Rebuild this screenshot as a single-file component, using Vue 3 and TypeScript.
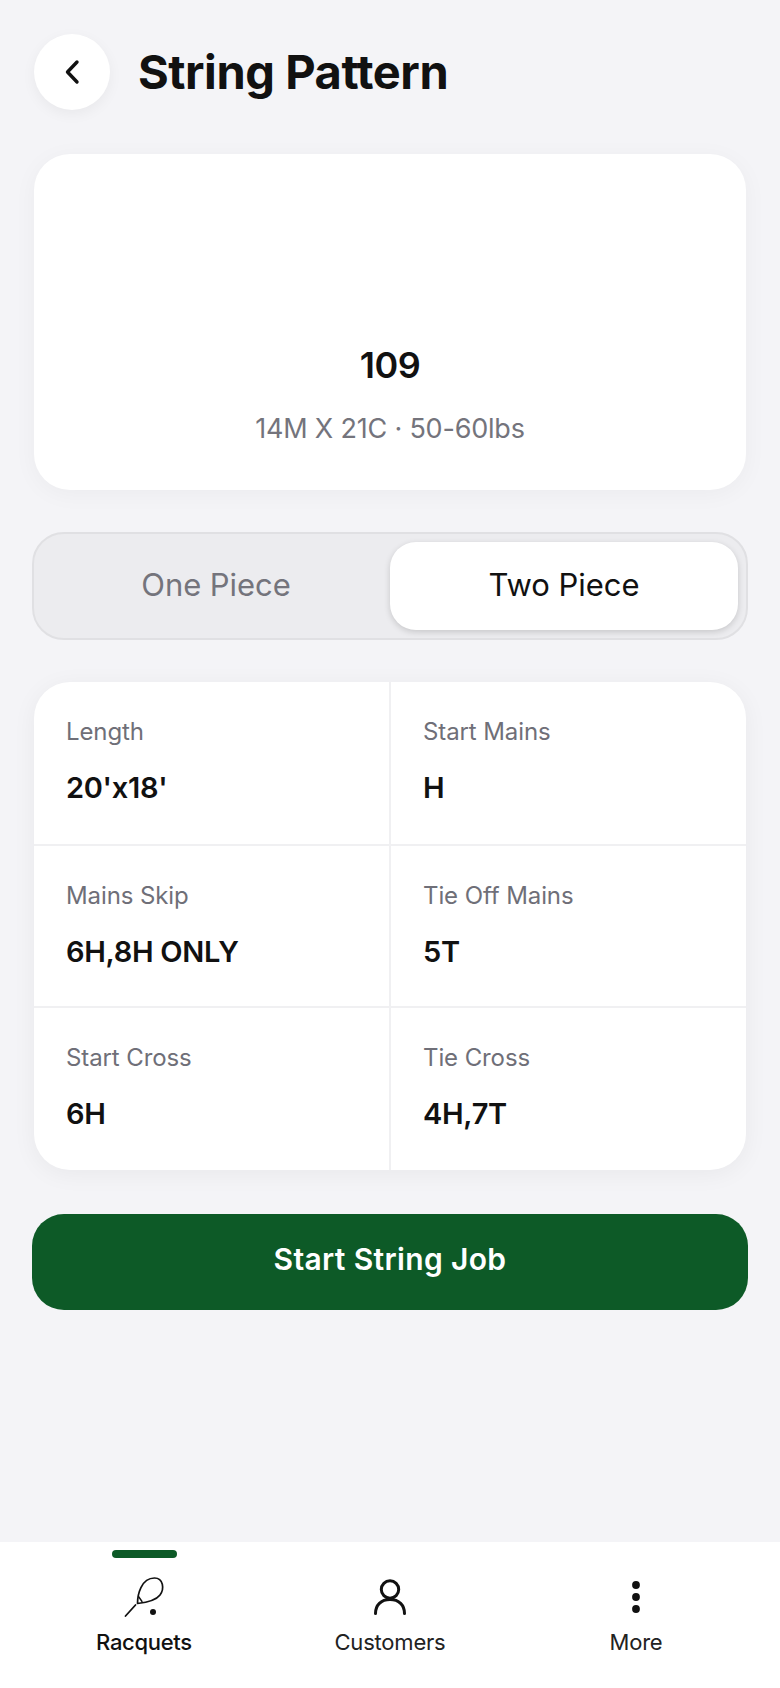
<script setup lang="ts">
const cells: { label: string; value: string }[] = [
  { label: 'Length', value: "20'x18'" },
  { label: 'Start Mains', value: 'H' },
  { label: 'Mains Skip', value: '6H,8H ONLY' },
  { label: 'Tie Off Mains', value: '5T' },
  { label: 'Start Cross', value: '6H' },
  { label: 'Tie Cross', value: '4H,7T' },
]
</script>

<template>
  <div class="screen">
    <main class="content">
      <header class="header">
        <button class="back" aria-label="Back">
          <svg width="24" height="28" viewBox="0 0 24 28" fill="none">
            <path d="M17 4 L7.5 14 L17 24" stroke="#111" stroke-width="3.4" stroke-linecap="round" stroke-linejoin="round" />
          </svg>
        </button>
        <h1 class="title">String Pattern</h1>
      </header>

      <section class="hero">
        <div class="hero-num">109</div>
        <div class="hero-sub">14M X 21C · 50-60lbs</div>
      </section>

      <div class="segment">
        <div class="seg-item">One Piece</div>
        <div class="seg-item active">Two Piece</div>
      </div>

      <section class="grid">
        <div v-for="c in cells" :key="c.label" class="cell">
          <div class="cell-label">{{ c.label }}</div>
          <div class="cell-value">{{ c.value }}</div>
        </div>
      </section>

      <button class="start"><span>Start String Job</span></button>
    </main>

    <nav class="nav">
      <div class="nav-item">
        <span class="indicator"></span>
        <svg class="nav-icon" width="44" height="44" viewBox="0 0 44 44" fill="none">
          <path d="M15.5 28.5 C15.5 20 19 3 32.5 3 C41.5 3 42.5 14 38 20 C34 25.5 24 27.5 15.5 28.5 Z" stroke="#111" stroke-width="1.7" stroke-linejoin="round" />
          <path d="M16.5 21.5 L20 26.5" stroke="#111" stroke-width="1.4" stroke-linecap="round" />
          <path d="M13.5 30 L3.5 41" stroke="#111" stroke-width="1.8" stroke-linecap="round" />
          <circle cx="31" cy="37" r="3" fill="#111" />
        </svg>
        <span class="nav-label strong">Racquets</span>
      </div>
      <div class="nav-item">
        <svg class="nav-icon" width="44" height="44" viewBox="0 0 44 44" fill="none">
          <circle cx="22" cy="14.5" r="8.7" stroke="#111" stroke-width="3" />
          <path d="M7.5 38.5 C7.5 30 13 24.5 22 24.5 C31 24.5 36.5 30 36.5 38.5" stroke="#111" stroke-width="3" stroke-linecap="round" />
        </svg>
        <span class="nav-label">Customers</span>
      </div>
      <div class="nav-item">
        <svg class="nav-icon" width="44" height="44" viewBox="0 0 44 44" fill="#111">
          <circle cx="22" cy="10" r="3.9" />
          <circle cx="22" cy="22" r="3.9" />
          <circle cx="22" cy="34" r="3.9" />
        </svg>
        <span class="nav-label">More</span>
      </div>
    </nav>
  </div>
</template>

<style>
html, body { margin: 0; background: #f4f4f7; }
</style>

<style scoped>
.screen {
  width: 780px;
  height: 1688px;
  display: flex;
  flex-direction: column;
  background: #f4f4f7;
  font-family: Inter, "Liberation Sans", sans-serif;
  color: #111;
  overflow: hidden;
}
.content {
  flex: 1;
  padding: 34px 32px 0;
  display: flex;
  flex-direction: column;
}
.header {
  display: flex;
  align-items: center;
  gap: 28px;
  padding-left: 2px;
  height: 76px;
}
.back {
  width: 76px;
  height: 76px;
  border: 0;
  padding: 0;
  border-radius: 50%;
  background: #fff;
  display: flex;
  align-items: center;
  justify-content: center;
  box-shadow: 0 4px 14px rgba(0, 0, 0, 0.05);
}
.title {
  margin: 0;
  font-size: 47px;
  line-height: 50px;
  font-weight: 700;
  letter-spacing: -0.45px;
  color: #111;
}
.hero {
  margin: 44px 2px 0;
  height: 336px;
  box-sizing: border-box;
  background: #fff;
  border-radius: 36px;
  box-shadow: 0 4px 24px rgba(0, 0, 0, 0.04);
  display: flex;
  flex-direction: column;
  align-items: center;
  padding-top: 190px;
}
.hero-num {
  font-size: 36px;
  line-height: 42px;
  font-weight: 600;
  letter-spacing: -0.5px;
}
.hero-sub {
  margin-top: 26px;
  font-size: 27px;
  line-height: 34px;
  color: #74747c;
  letter-spacing: -0.2px;
}
.segment {
  margin-top: 42px;
  height: 108px;
  box-sizing: border-box;
  background: #ececef;
  border: 2px solid #e0e0e3;
  border-radius: 32px;
  padding: 8px;
  display: grid;
  grid-template-columns: 1fr 1fr;
  gap: 0;
}
.seg-item {
  display: flex;
  align-items: center;
  justify-content: center;
  font-size: 31px;
  padding-bottom: 4px;
  letter-spacing: -0.05px;
  color: #74747c;
  border-radius: 26px;
}
.seg-item.active {
  background: #fff;
  color: #111;
  box-shadow: 0 2px 6px rgba(0, 0, 0, 0.16);
}
.grid {
  margin: 42px 2px 0;
  height: 488px;
  background: #fff;
  border-radius: 36px;
  box-shadow: 0 4px 24px rgba(0, 0, 0, 0.05);
  display: grid;
  grid-template-columns: 357px 355px;
  grid-template-rows: 164px 162px 162px;
  overflow: hidden;
}
.cell {
  box-sizing: border-box;
  padding: 35px 32px 0;
  border-right: 2px solid #f0f0f2;
  border-bottom: 2px solid #f0f0f2;
}
.cell:nth-child(2n) { border-right: 0; }
.cell:nth-last-child(-n + 2) { border-bottom: 0; }
.cell-label {
  font-size: 24px;
  line-height: 30px;
  letter-spacing: -0.1px;
  color: #6f6f78;
}
.cell-value {
  margin-top: 23px;
  font-size: 29px;
  line-height: 36px;
  font-weight: 600;
  letter-spacing: -0.3px;
  color: #111;
}
.start {
  margin-top: 44px;
  height: 96px;
  border: 0;
  padding: 0 0 6px;
  border-radius: 32px;
  background: #0d5a27;
  color: #fff;
  font-family: inherit;
  font-size: 30px;
  font-weight: 600;
  letter-spacing: 0.35px;
}
.nav {
  height: 146px;
  flex: none;
  background: #fff;
  display: grid;
  grid-template-columns: 288px 204px 288px;
  box-sizing: border-box;
}
.nav-item {
  position: relative;
  display: flex;
  flex-direction: column;
  align-items: center;
  padding-top: 33px;
}
.indicator {
  position: absolute;
  top: 8px;
  left: 112px;
  width: 65px;
  height: 8px;
  border-radius: 4px;
  background: #0d5a27;
}
.nav-icon { display: block; }
.nav-label {
  margin-top: 8px;
  font-size: 22px;
  line-height: 30px;
  letter-spacing: -0.2px;
  color: #222;
}
.nav-label.strong { color: #111; font-weight: 500; letter-spacing: -0.3px; }
</style>
